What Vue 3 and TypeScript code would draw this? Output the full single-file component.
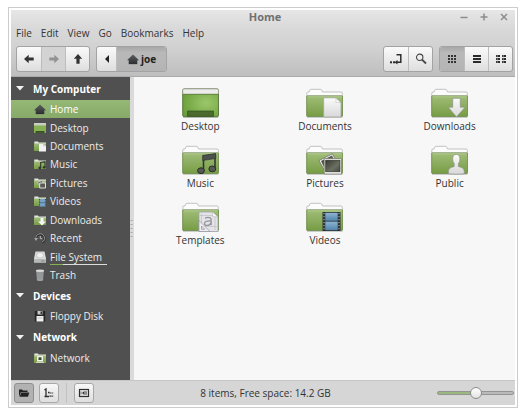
<script setup lang="ts">
import { ref } from 'vue'

interface Place { label: string; icon: string; usage?: number }
interface Group { title: string; places: Place[] }

const menus = ['File', 'Edit', 'View', 'Go', 'Bookmarks', 'Help']
const groups: Group[] = [
  {
    title: 'My Computer',
    places: [
      { label: 'Home', icon: 'home' },
      { label: 'Desktop', icon: 's-desktop' },
      { label: 'Documents', icon: 's-documents' },
      { label: 'Music', icon: 's-music' },
      { label: 'Pictures', icon: 's-pictures' },
      { label: 'Videos', icon: 's-videos' },
      { label: 'Downloads', icon: 's-downloads' },
      { label: 'Recent', icon: 's-recent' },
      { label: 'File System', icon: 's-disk', usage: 23 },
      { label: 'Trash', icon: 's-trash' },
    ],
  },
  { title: 'Devices', places: [{ label: 'Floppy Disk', icon: 's-floppy' }] },
  { title: 'Network', places: [{ label: 'Network', icon: 's-network' }] },
]
const files = ['Desktop', 'Documents', 'Downloads', 'Music', 'Pictures', 'Public', 'Templates', 'Videos']

const current = ref('Home')
const view = ref('icons')
const views = [
  { id: 'icons', label: 'Icon view' },
  { id: 'list', label: 'List view' },
  { id: 'compact', label: 'Compact view' },
]
const zoom = ref(50)
</script>

<template>
  <svg class="defs" aria-hidden="true">
    <defs>
      <linearGradient id="green" x1="0" y1="0" x2="0" y2="1">
        <stop offset="0" stop-color="#a0bd78" /><stop offset="1" stop-color="#769c44" />
      </linearGradient>
      <radialGradient id="desk" cx=".65" cy=".5" r=".7">
        <stop offset="0" stop-color="#9cc76c" /><stop offset="1" stop-color="#699f38" />
      </radialGradient>
      <linearGradient id="paper" x1="0" y1="0" x2="0" y2="1">
        <stop offset="0" stop-color="#fbfbfb" /><stop offset="1" stop-color="#d8d8d8" />
      </linearGradient>
      <linearGradient id="photo" x1="0" y1="0" x2="1" y2="1">
        <stop offset="0" stop-color="#35382f" /><stop offset=".6" stop-color="#6c7062" /><stop offset="1" stop-color="#45483e" />
      </linearGradient>
      <linearGradient id="film" x1="0" y1="0" x2="0" y2="1">
        <stop offset="0" stop-color="#8db4d3" /><stop offset="1" stop-color="#5184ab" />
      </linearGradient>
      <linearGradient id="dark" x1="0" y1="0" x2="0" y2="1">
        <stop offset="0" stop-color="#5c5f60" /><stop offset="1" stop-color="#2b2d2e" />
      </linearGradient>
    </defs>

    <symbol id="folder" viewBox="0 0 37 30">
      <path d="M.8 28V5.2Q.8 4 2 4h1l.8-2Q4.100 1.300 5 1.300h9.500q.9 0 1.200.7l.8 2H35q1.300 0 1.300 1.200V28z" fill="#fcfcfc" stroke="#b4b4b4" stroke-width=".8" />
      <path d="M1 7.500h35.200" stroke="#c9ccc4" />
      <path d="M.7 8h35.800v19.700q0 .9-.9.900h-34q-.9 0-.9-.9z" fill="url(#green)" stroke="#66873f" stroke-width=".7" />
      <path d="M1.500 8.800h34.200" stroke="#bcd69a" stroke-width=".8" />
      <path d="M1 29.300h35.500" stroke="#000" stroke-opacity=".18" />
    </symbol>
    <symbol id="f-Desktop" viewBox="0 0 37 30">
      <rect x=".7" y=".9" width="35.800" height="27.800" rx="1.500" fill="url(#desk)" stroke="#55713a" stroke-width=".9" />
      <path d="M.8 6V2.200Q.8 1 2 1h33.200q1.200 0 1.200 1.200V6z" fill="#ececea" stroke="#9b9b98" stroke-width=".6" />
      <path d="M1.200 6.500h34.800" stroke="#5c8035" stroke-width=".7" />
      <path d="M5.500 28.300V23H31.500v5.300z" fill="#4a6b2d" stroke="#34521c" stroke-width=".7" />
      <path d="M1 29.400h35.500" stroke="#000" stroke-opacity=".2" />
    </symbol>
    <symbol id="f-Documents" viewBox="0 0 37 30">
      <use href="#folder" />
      <path d="M17.700 29V9.800H29.500l5.500 5V29z" fill="url(#paper)" stroke="#a4a69f" stroke-width=".8" />
      <path d="M29.500 9.800q1.200 2.500.3 4.700 2.700-.6 5.200.3z" fill="#fff" stroke="#b4b4b4" stroke-width=".5" />
    </symbol>
    <symbol id="f-Downloads" viewBox="0 0 37 30">
      <use href="#folder" />
      <path d="M21.700 10.300h7.600v8.900h4.700L25.500 29l-8.300-9.800h4.500z" fill="url(#paper)" stroke="#8c9485" stroke-width=".7" />
    </symbol>
    <symbol id="f-Music" viewBox="0 0 37 30">
      <use href="#folder" />
      <path d="M21.500 25V11.200L33 9.300V23" fill="none" stroke="#333733" stroke-width="1.600" />
      <path d="M20.700 10.300 33.800 8.700v4.800l-13.100 2z" fill="#4c514d" stroke="#2c302c" stroke-width=".6" />
      <ellipse cx="19" cy="25.700" rx="3.400" ry="2.900" fill="#555956" stroke="#292c29" />
      <ellipse cx="30.300" cy="23.900" rx="3.400" ry="2.900" fill="#555956" stroke="#292c29" />
    </symbol>
    <symbol id="f-Pictures" viewBox="0 0 37 30">
      <use href="#folder" />
      <path d="m13 15.500 13.500-6.700L33 22l-13 6z" fill="#f2f2f0" stroke="#62655c" stroke-width=".7" />
      <path d="m15 16 11-5.400 4 8-11 6z" fill="url(#photo)" />
      <rect x="18.200" y="13.700" width="17.300" height="15.300" fill="#f4f4f2" stroke="#77796f" stroke-width=".7" />
      <rect x="19.700" y="15.200" width="14.300" height="11.600" fill="url(#photo)" stroke="#292b24" stroke-width=".6" />
    </symbol>
    <symbol id="f-Public" viewBox="0 0 37 30">
      <use href="#folder" />
      <path d="M17.400 28.800q-.4-5.600 3.300-6.500l2.500-.8v-3q-1.500-1.500-1.500-4.700 0-4.400 3.600-4.400t3.600 4.400q0 3.200-1.500 4.700v3l2.500.8q3.800.9 3.400 6.500-8 1-15.900 0z" fill="url(#paper)" stroke="#8f948a" stroke-width=".7" />
    </symbol>
    <symbol id="f-Templates" viewBox="0 0 37 30">
      <use href="#folder" />
      <path d="M17 29.500V10h13.500l5.500 5v14.500z" fill="#e4e4e8" stroke="#a2a2a9" stroke-width=".8" />
      <path d="M19.500 12v16M33 15v13M18 13.500h13.500M18 24.500h17" stroke="#b7b7bf" stroke-width=".6" />
      <path d="M23 16.500q1.200-1.200 3.200-1.200 3 0 3 2.800v5.200M29.200 19q-6.700-.3-6.700 2.500 0 1.900 2.300 1.900 3.500 0 4.400-3.400" fill="none" stroke="#96969f" stroke-width="1.300" />
      <path d="M17 18.500 28 29.500H17zM19.500 24v3.300h3.300z" fill="#eeeef1" stroke="#92929c" stroke-width=".7" fill-rule="evenodd" />
      <path d="m30.500 10 .2 4.600 5.300.4z" fill="#fafafa" stroke="#aaa" stroke-width=".5" />
    </symbol>
    <symbol id="f-Videos" viewBox="0 0 37 30">
      <use href="#folder" />
      <rect x="16.500" y="10" width="18" height="19" fill="#2c3338" />
      <rect x="19.300" y="10.800" width="12.400" height="8" fill="url(#film)" />
      <rect x="19.300" y="19.600" width="12.400" height="8.600" fill="url(#film)" />
      <path d="M18 11v18M33 11v18" stroke="#b9c0c4" stroke-width="1" stroke-dasharray="1.200 1.800" />
    </symbol>

    <symbol id="s-folder" viewBox="0 0 12 12">
      <path d="M.3 10V1.500h3.700l.7 1H12V10z" fill="#e3e6df" />
      <path d="M0 3.500h12V11H0z" fill="url(#green)" />
    </symbol>
    <symbol id="s-desktop" viewBox="0 0 12 12">
      <rect y="1" width="12" height="10" rx=".5" fill="#86b254" />
      <path d="M0 1h12v2.500H0z" fill="#c9cfc3" />
      <path d="M1.500 11V9h9v2z" fill="#3d5527" />
    </symbol>
    <symbol id="s-documents" viewBox="0 0 12 12">
      <use href="#s-folder" />
      <path d="M5 4h4.500L12 6v5.500H5z" fill="#f1f1f1" /><path d="M9.500 4v2H12" fill="none" stroke="#aaa" stroke-width=".5" />
    </symbol>
    <symbol id="s-music" viewBox="0 0 12 12">
      <use href="#s-folder" />
      <path d="M6.700 10V4.500l4.300-.7V9" fill="none" stroke="#333b30" stroke-width="1.200" />
      <circle cx="5.800" cy="10" r="1.400" fill="#333b30" /><circle cx="10.200" cy="9.300" r="1.400" fill="#333b30" />
    </symbol>
    <symbol id="s-pictures" viewBox="0 0 12 12">
      <use href="#s-folder" />
      <path d="m3.500 5.500 4.500-2 1.500 3-4 2z" fill="#555" stroke="#ddd" stroke-width=".7" />
      <path d="M5.700 6h5.800v5H5.700z" fill="#5a5c54" stroke="#eee" stroke-width=".9" />
    </symbol>
    <symbol id="s-videos" viewBox="0 0 12 12">
      <use href="#s-folder" />
      <path d="M5 4h7v7.500H5z" fill="#75a4c9" /><path d="M5.600 4v7.500M11.400 4v7.500" stroke="#2c4252" stroke-width="1" stroke-dasharray="1 .6" /><path d="M6 7.700h5" stroke="#3c5667" stroke-width=".6" />
    </symbol>
    <symbol id="s-downloads" viewBox="0 0 12 12">
      <use href="#s-folder" />
      <path d="M6.500 4h3v3.500H12l-4 4-4-4h2.500z" fill="#f7f7f7" />
    </symbol>
    <symbol id="s-recent" viewBox="0 0 12 12">
      <path d="M2 7.500A4.300 4.300 0 1 1 8 10.500" fill="none" stroke="#303030" stroke-width="2.400" />
      <path d="M2 7.200A4.300 4.300 0 1 1 8 10" fill="none" stroke="#9a9a9a" stroke-width="1" />
      <path d="M0 6h4L2 9z" fill="#a5a5a5" /><path d="M6.300 4v2.700h2" fill="none" stroke="#b5b5b5" />
    </symbol>
    <symbol id="s-disk" viewBox="0 0 12 12">
      <path d="M1.500.5h9L12 7.500V11q0 .5-.5.500H.5Q0 11.500 0 11V7.500z" fill="#d9dada" />
      <path d="M0 8h12v3.500H0z" fill="#b6b8b8" /><ellipse cx="6" cy="4.300" rx="3.500" ry="2.700" fill="#f0f0f0" stroke="#aaa" stroke-width=".5" /><path d="M7 10h3.500" stroke="#777" stroke-width=".8" />
    </symbol>
    <symbol id="s-trash" viewBox="0 0 12 12">
      <path d="M2.300 1.500h7.400L9 11.500q-3 .8-6 0z" fill="#a9abac" />
      <path d="M4 3v7.500M6 3v7.800M8 3v7.500" stroke="#686a6b" stroke-width=".6" />
      <ellipse cx="6" cy="1.700" rx="4.200" ry="1.200" fill="#d6d8d8" />
    </symbol>
    <symbol id="s-floppy" viewBox="0 0 12 12">
      <path d="M.8 1h10.400v10.500H.8z" fill="#262626" />
      <path d="M2.500 6h7v5.500h-7z" fill="#f1f1f1" /><path d="M3.500 1h5v3.500h-5z" fill="#c8caca" /><path d="M6.500 1.500H8V4H6.500z" fill="#333" /><path d="M3.500 8h5" stroke="#aaa" stroke-width=".7" />
    </symbol>
    <symbol id="s-network" viewBox="0 0 12 12">
      <use href="#s-folder" />
      <rect x="3" y="4" width="6" height="5.500" rx=".6" fill="#f3f3f3" /><rect x="4.500" y="5.300" width="3" height="2.700" fill="#38482c" />
      <path d="M2 10.500h8" stroke="#dfe8d5" stroke-width=".8" />
    </symbol>

    <symbol id="home" viewBox="0 0 12 12">
      <path d="M6 1.500 12 7.200h-1.700v4.100H1.700V7.200H0z" fill="url(#dark)" />
      <path d="M1.700 11.700h8.600" stroke="#fff" stroke-opacity=".25" stroke-width=".6" />
    </symbol>
    <symbol id="arrow" viewBox="0 0 10 10">
      <path d="M0 5 4.700.8v2.600h5v3.200h-5v2.600z" fill="currentColor" />
    </symbol>
    <symbol id="locate" viewBox="0 0 12 12">
      <path d="M6.500 1.700h4.300v7.600H7" fill="none" stroke="#2e2e2e" stroke-width="1.500" />
      <path d="M4.500 9.300 7.500 7v4.600z" fill="#2e2e2e" /><rect x="0" y="8.300" width="2" height="2" fill="#2e2e2e" /><rect x="3" y="8.300" width="2" height="2" fill="#2e2e2e" />
    </symbol>
    <symbol id="search" viewBox="0 0 12 12">
      <circle cx="4.700" cy="4.300" r="3.200" fill="none" stroke="#474747" stroke-width="1.100" />
      <path d="m7 6.700 4 3.800" stroke="#474747" stroke-width="1.800" />
    </symbol>
    <symbol id="v-icons" viewBox="0 0 12 12">
      <path d="M2 3h8M2 6h8M2 9h8" stroke="#333" stroke-width="2" stroke-dasharray="2 1" />
    </symbol>
    <symbol id="v-list" viewBox="0 0 12 12">
      <path d="M2 3h8M2 6h8M2 9h8" stroke="#2a2a2a" stroke-width="2" />
    </symbol>
    <symbol id="v-compact" viewBox="0 0 12 12">
      <path d="M1 3h4M7 3h4M1 6h4M7 6h4M1 9h4M7 9h4" stroke="#2a2a2a" stroke-width="2" />
      <path d="M2.300 2v8M8.300 2v8" stroke="#bbb" stroke-width=".6" />
    </symbol>
    <symbol id="b-places" viewBox="0 0 12 12">
      <path d="M1 9.500V2.500h3l1 1h4.500V5H3z" fill="#222" /><path d="M3.300 5.500h8L10 9.700H1.500z" fill="#222" />
    </symbol>
    <symbol id="b-tree" viewBox="0 0 12 12">
      <path d="M1.500 3 3 2v7.500M1.500 9.500H6M5 5.500h1.500" fill="none" stroke="#2e2e2e" stroke-width="1.300" />
      <path d="M6.500 6h4M6.500 9.200h4" stroke="#2e2e2e" stroke-width="1.200" stroke-dasharray="1.400 .5" />
    </symbol>
    <symbol id="b-panel" viewBox="0 0 12 12">
      <rect x="1.500" y="2.500" width="9" height="7" fill="#e4e4e4" stroke="#2e2e2e" stroke-width="1.200" />
      <path d="M3 4.500v3" stroke="#777" /><path d="M4 6 6.500 4v4z" fill="#2a2a2a" /><path d="M6.500 4.200H9v3.600H6.500z" fill="#8a8a8a" />
    </symbol>
  </svg>

  <main class="window">
    <header class="header">
      <div class="titlebar">
        <h1>Home</h1>
        <div class="controls">
          <button type="button" aria-label="Minimize"><svg viewBox="0 0 8 8"><path d="M.5 4.500h7" /></svg></button>
          <button type="button" aria-label="Maximize"><svg viewBox="0 0 8 8"><path d="M.5 4h7M4 .5v7" /></svg></button>
          <button type="button" aria-label="Close"><svg viewBox="0 0 8 8"><path d="m1 1 6 6M7 1 1 7" /></svg></button>
        </div>
      </div>
      <nav class="menubar" aria-label="Menu">
        <button v-for="m in menus" :key="m" type="button">{{ m }}</button>
      </nav>
      <div class="toolbar">
        <div class="segmented">
          <button type="button" aria-label="Back"><svg><use href="#arrow" /></svg></button>
          <button type="button" aria-label="Forward" disabled><svg class="forward"><use href="#arrow" /></svg></button>
          <button type="button" aria-label="Up"><svg class="up"><use href="#arrow" /></svg></button>
        </div>
        <div class="segmented path">
          <button type="button" class="narrow" aria-label="Previous folders"><svg viewBox="0 0 10 10"><path d="M3 5 7 1v8z" fill="#222" /></svg></button>
          <button type="button" class="pressed crumb"><svg class="big"><use href="#home" /></svg>joe</button>
        </div>
        <div class="segmented end">
          <button type="button" aria-label="Toggle location entry"><svg class="big"><use href="#locate" /></svg></button>
          <button type="button" aria-label="Search"><svg class="big"><use href="#search" /></svg></button>
        </div>
        <div class="segmented">
          <button v-for="v in views" :key="v.id" type="button" :aria-label="v.label" :class="{ pressed: view === v.id }" @click="view = v.id">
            <svg class="big"><use :href="'#v-' + v.id" /></svg>
          </button>
        </div>
      </div>
    </header>

    <div class="body">
      <nav class="sidebar" aria-label="Places">
        <template v-for="g in groups" :key="g.title">
          <h2><svg viewBox="0 0 8 5"><path d="M0 0h8L4 4.500z" /></svg>{{ g.title }}</h2>
          <a v-for="p in g.places" :key="p.label" href="#" :class="{ active: current === p.label }" @click.prevent="current = p.label">
            <svg><use :href="'#' + p.icon" /></svg>
            <span>{{ p.label }}<i v-if="p.usage" class="usage"><b :style="{ width: p.usage + '%' }"></b></i></span>
          </a>
        </template>
      </nav>
      <div class="splitter"><svg viewBox="0 0 3 20"><path d="M1.500 1v19" /></svg></div>
      <section class="files" aria-label="Files">
        <button v-for="f in files" :key="f" type="button">
          <svg><use :href="'#f-' + f" /></svg>
          <span>{{ f }}</span>
        </button>
      </section>
    </div>

    <footer class="statusbar">
      <div class="toggles">
        <button type="button" class="pressed" aria-label="Show places"><svg><use href="#b-places" /></svg></button>
        <button type="button" aria-label="Show tree"><svg><use href="#b-tree" /></svg></button>
        <span class="rule"></span>
        <button type="button" aria-label="Hide sidebar"><svg><use href="#b-panel" /></svg></button>
      </div>
      <p>8 items, Free space: 14.2 GB</p>
      <input v-model="zoom" type="range" min="0" max="100" aria-label="Zoom" />
    </footer>
  </main>
</template>

<style>
body { background: #fff; }
</style>

<style scoped>
* { box-sizing: border-box; }
.defs { position: absolute; width: 0; height: 0; }
button { font: inherit; color: inherit; margin: 0; padding: 0; border: 0; background: none; }
h1, h2, p { margin: 0; font-size: inherit; }
svg { display: block; flex: none; }

.window {
  display: flex;
  flex-direction: column;
  min-height: calc(100vh - 13px);
  margin: 7px 4px 0 8px;
  padding: 2px;
  border: 1px solid #ccc;
  background: #fff;
  font: 10px/16px "Open Sans", "Noto Sans", sans-serif;
  color: #333;
}
.header {
  background: linear-gradient(#e6e6e6, #d8d8d8 30%, #d2d2d2 55%, #bebebe);
  border-bottom: 1px solid #ababab;
}
.titlebar { display: grid; grid-template-columns: 1fr auto 1fr; align-items: center; height: 14px; padding-left: 4px; }
.titlebar h1 { grid-column: 2; font-size: 11px; line-height: 14px; color: #707070; }
.controls { display: flex; justify-content: flex-end; gap: 12px; padding-right: 7px; }
.controls svg { width: 8px; height: 8px; }
.controls path { stroke: #8c8c8c; stroke-width: 1.5; fill: none; }
.menubar { display: flex; gap: 9px; height: 18px; padding-left: 5px; }
.menubar button { line-height: 18px; }
.toolbar { display: flex; gap: 6px; padding: 4px 2px 4px 5px; }
.segmented {
  display: flex;
  height: 26px;
  border: 1px solid #a3a3a3;
  border-radius: 3px;
  overflow: hidden;
  background: linear-gradient(#fafafa, #dedede);
}
.segmented button { display: flex; align-items: center; justify-content: center; width: 24px; color: #333; }
.segmented button + button { border-left: 1px solid #bdbdbd; }
.segmented button:disabled { color: #929292; background: #d3d3d3; }
.segmented .narrow { width: 19px; }
.segmented .crumb { width: 50px; gap: 2px; font-weight: bold; color: #222; }
.segmented .pressed { background: linear-gradient(#a8a8a8, #b9b9b9 25%, #b4b4b4); }
.segmented svg { width: 10px; height: 10px; }
.segmented .big { width: 12px; height: 12px; }
.segmented .up { transform: rotate(90deg); }
.segmented .forward { transform: rotate(180deg); }
.end { margin-left: auto; }

.body { display: flex; flex: 1; }
.sidebar {
  display: flex;
  flex-direction: column;
  width: 119px;
  padding-bottom: 13px;
  background: #505050;
  color: #ececec;
}
.sidebar h2 { display: flex; align-items: center; gap: 9px; height: 23px; padding-left: 5px; color: #fff; }
.sidebar h2 svg { width: 8px; height: 5px; fill: #f2f2f2; }
.sidebar a {
  display: flex;
  flex: 1;
  align-items: center;
  gap: 4px;
  min-height: 17px;
  padding-left: 23px;
  color: inherit;
  text-decoration: none;
}
.sidebar a svg { width: 12px; height: 12px; }
.sidebar a.active { background: linear-gradient(#96b877, #87aa68); color: #fff; }
.sidebar span { position: relative; }
.usage { position: absolute; left: 0; right: -5px; bottom: 0; height: 1px; background: #dcdcdc; }
.usage b { display: block; height: 1px; background: #86b254; }
.splitter { display: flex; align-items: center; width: 4px; background: #dadada; }
.splitter svg { width: 3px; height: 20px; }
.splitter path { stroke: #a8a8a8; stroke-width: 2; stroke-dasharray: 1 3; }
.files {
  flex: 1;
  display: grid;
  grid-template-columns: repeat(3, 1fr);
  align-content: start;
  gap: 11px 0;
  padding: 11px 3px 11px 4px;
  background: #f7f7f7;
}
.files button { display: flex; flex-direction: column; align-items: center; line-height: 16px; }
.files svg { width: 37px; height: 30px; }

.statusbar {
  display: flex;
  align-items: center;
  height: 25px;
  padding: 0 1px 0 3px;
  border-top: 1px solid #c6c6c6;
  background: #d6d6d6;
}
.toggles { display: flex; align-items: center; gap: 5px; }
.toggles button {
  display: flex;
  align-items: center;
  justify-content: center;
  width: 20px;
  height: 20px;
  border: 1px solid #a8a8a8;
  border-radius: 3px;
  background: linear-gradient(#f8f8f8, #dedede);
}
.toggles .pressed { border-color: #8f8f8f; background: #b2b2b2; }
.toggles svg { width: 12px; height: 12px; }
.rule { width: 1px; height: 20px; margin: 0 2px; background: #c2c2c2; }
.statusbar p { flex: 1; text-align: center; }
input[type='range'] { appearance: none; width: 77px; height: 14px; margin: 0; background: none; }
input[type='range']::-webkit-slider-runnable-track {
  height: 4px;
  border: 1px solid #949494;
  border-radius: 2px;
  background: linear-gradient(90deg, #9bb97e 50%, #bababa 50%);
}
input[type='range']::-webkit-slider-thumb {
  appearance: none;
  width: 12px;
  height: 12px;
  margin-top: -5px;
  border: 1px solid #8c8c8c;
  border-radius: 50%;
  background: linear-gradient(#fff, #e2e2e2);
}
</style>
